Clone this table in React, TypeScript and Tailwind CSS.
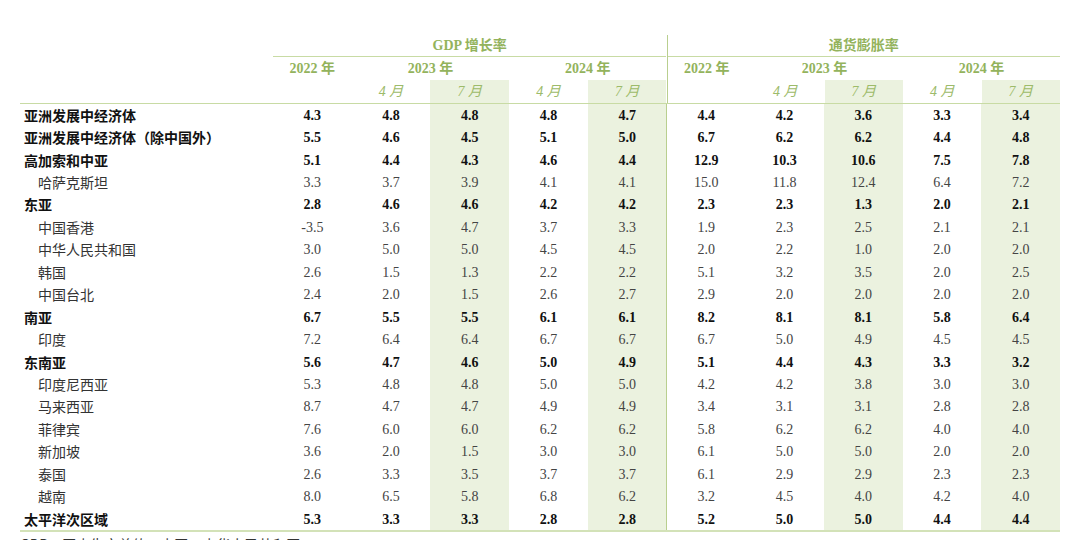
const rows: { label: string; bold: boolean; v: string[] }[] = [
  { label: "亚洲发展中经济体", bold: true, v: ["4.3", "4.8", "4.8", "4.8", "4.7", "4.4", "4.2", "3.6", "3.3", "3.4"] },
  { label: "亚洲发展中经济体（除中国外）", bold: true, v: ["5.5", "4.6", "4.5", "5.1", "5.0", "6.7", "6.2", "6.2", "4.4", "4.8"] },
  { label: "高加索和中亚", bold: true, v: ["5.1", "4.4", "4.3", "4.6", "4.4", "12.9", "10.3", "10.6", "7.5", "7.8"] },
  { label: "哈萨克斯坦", bold: false, v: ["3.3", "3.7", "3.9", "4.1", "4.1", "15.0", "11.8", "12.4", "6.4", "7.2"] },
  { label: "东亚", bold: true, v: ["2.8", "4.6", "4.6", "4.2", "4.2", "2.3", "2.3", "1.3", "2.0", "2.1"] },
  { label: "中国香港", bold: false, v: ["-3.5", "3.6", "4.7", "3.7", "3.3", "1.9", "2.3", "2.5", "2.1", "2.1"] },
  { label: "中华人民共和国", bold: false, v: ["3.0", "5.0", "5.0", "4.5", "4.5", "2.0", "2.2", "1.0", "2.0", "2.0"] },
  { label: "韩国", bold: false, v: ["2.6", "1.5", "1.3", "2.2", "2.2", "5.1", "3.2", "3.5", "2.0", "2.5"] },
  { label: "中国台北", bold: false, v: ["2.4", "2.0", "1.5", "2.6", "2.7", "2.9", "2.0", "2.0", "2.0", "2.0"] },
  { label: "南亚", bold: true, v: ["6.7", "5.5", "5.5", "6.1", "6.1", "8.2", "8.1", "8.1", "5.8", "6.4"] },
  { label: "印度", bold: false, v: ["7.2", "6.4", "6.4", "6.7", "6.7", "6.7", "5.0", "4.9", "4.5", "4.5"] },
  { label: "东南亚", bold: true, v: ["5.6", "4.7", "4.6", "5.0", "4.9", "5.1", "4.4", "4.3", "3.3", "3.2"] },
  { label: "印度尼西亚", bold: false, v: ["5.3", "4.8", "4.8", "5.0", "5.0", "4.2", "4.2", "3.8", "3.0", "3.0"] },
  { label: "马来西亚", bold: false, v: ["8.7", "4.7", "4.7", "4.9", "4.9", "3.4", "3.1", "3.1", "2.8", "2.8"] },
  { label: "菲律宾", bold: false, v: ["7.6", "6.0", "6.0", "6.2", "6.2", "5.8", "6.2", "6.2", "4.0", "4.0"] },
  { label: "新加坡", bold: false, v: ["3.6", "2.0", "1.5", "3.0", "3.0", "6.1", "5.0", "5.0", "2.0", "2.0"] },
  { label: "泰国", bold: false, v: ["2.6", "3.3", "3.5", "3.7", "3.7", "6.1", "2.9", "2.9", "2.3", "2.3"] },
  { label: "越南", bold: false, v: ["8.0", "6.5", "5.8", "6.8", "6.2", "3.2", "4.5", "4.0", "4.2", "4.0"] },
  { label: "太平洋次区域", bold: true, v: ["5.3", "3.3", "3.3", "2.8", "2.8", "5.2", "5.0", "5.0", "4.4", "4.4"] },
];

// columns 2, 4, 7, 9 (0-based) are the July forecasts, shaded
const shaded = [false, false, true, false, true, false, false, true, false, true];

const serif = "font-['Liberation_Serif','Noto_Sans_CJK_SC',serif]";

function Group({ title, left }: { title: string; left?: boolean }) {
  return (
    <div className={`col-span-5 grid grid-cols-5 ${left ? "border-l border-[#b9cf8f]" : ""}`}>
      <div className={`col-span-5 flex h-[22px] items-center justify-center border-b border-[#c8dba4] text-[14px] font-bold text-[#93b35c] ${serif}`}>
        {title}
      </div>
      <div className={`flex h-[23px] items-center justify-center text-[14px] font-bold text-[#93b35c] ${serif}`}>2022 年</div>
      <div className={`col-span-2 flex h-[23px] items-center justify-center text-[14px] font-bold text-[#93b35c] ${serif}`}>2023 年</div>
      <div className={`col-span-2 flex h-[23px] items-center justify-center text-[14px] font-bold text-[#93b35c] ${serif}`}>2024 年</div>
      <div className="h-[23px]" />
      {["4 月", "7 月", "4 月", "7 月"].map((m, i) => (
        <div
          key={i}
          className={`flex h-[23px] items-center justify-center text-[14px] italic text-[#9dbb6a] ${serif} ${i % 2 === 1 ? "bg-[#ebf2df]" : ""}`}
        >
          {m}
        </div>
      ))}
    </div>
  );
}

export default function App() {
  return (
    <div className="h-[540px] w-[1080px] overflow-hidden bg-white pt-[35px]">
      <div className="ml-[20px] w-[1040px]">
        <div className="grid grid-cols-[253px_repeat(10,minmax(0,1fr))] border-b border-[#c8dba4]">
          <div />
          <Group title="GDP 增长率" />
          <Group title="通货膨胀率" left />
        </div>

        <div className="border-b-2 border-[#d3e2b8]">
          {rows.map((r) => (
            <div key={r.label} className="grid h-[22.45px] grid-cols-[253px_repeat(10,minmax(0,1fr))]">
              <div
                className={`flex items-center font-['Noto_Sans_CJK_SC',sans-serif] text-[14px] ${
                  r.bold ? "pl-[4px] font-bold text-[#111]" : "pl-[18px] text-[#333]"
                }`}
              >
                {r.label}
              </div>
              {r.v.map((x, i) => (
                <div
                  key={i}
                  className={`flex items-center justify-center text-[14px] ${serif} ${
                    r.bold ? "font-bold text-[#111]" : "text-[#444]"
                  } ${shaded[i] ? "bg-[#ebf2df]" : ""} ${i === 5 ? "border-l border-[#b9cf8f]" : ""}`}
                >
                  {x}
                </div>
              ))}
            </div>
          ))}
        </div>

        <p className="pt-[3px] font-['Noto_Sans_CJK_SC',sans-serif] text-[14px] leading-[18px] text-[#333]">
          GDP = 国内生产总值，中国 = 中华人民共和国
        </p>
      </div>
    </div>
  );
}
